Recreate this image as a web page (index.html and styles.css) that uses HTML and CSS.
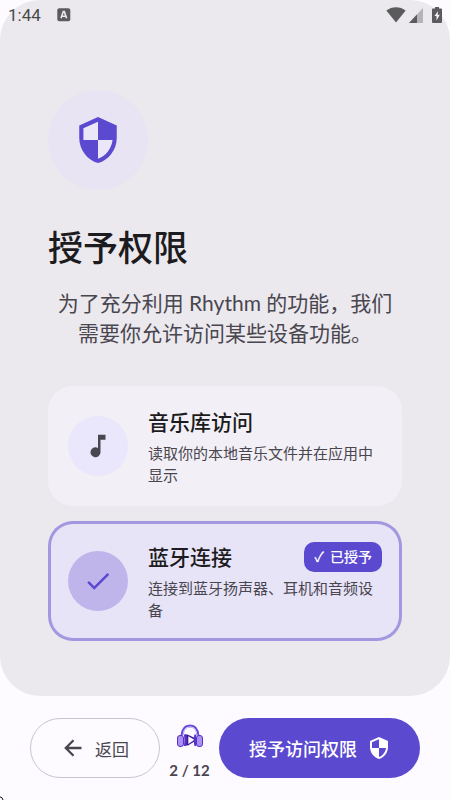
FILE: index.html
```html
<!DOCTYPE html>
<html lang="zh-CN">
<head>
<meta charset="utf-8">
<meta name="viewport" content="width=device-width, initial-scale=1">
<title>授予权限</title>
<link rel="stylesheet" href="styles.css">
</head>
<body>
<div class="screen">
  <main class="panel">
    <div class="status">
      <div class="status-group">
        <span class="clock">1:44</span>
        <svg class="status-a" width="14" height="14" viewBox="0 0 14 14" aria-hidden="true"><rect width="13" height="13" x=".3" y=".3" rx="2" fill="#5b5a5d"/><path d="M4 10.3 6.3 3.6h1L9.600 10.300M4.900 8.200h3.800" fill="none" stroke="#ebe9ee" stroke-width="1.600"/></svg>
      </div>
      <div class="status-group status-right">
        <svg width="20" height="16" viewBox="0 0 20 16" aria-hidden="true"><path d="M.3 3.600C6-1 14-1 19.700 3.600L10 15.500z" fill="#5b5a5d"/></svg>
        <svg class="signal" width="14" height="16" viewBox="0 0 14 16" aria-hidden="true"><path d="M14 1v15H0z" fill="#b5b3b8"/><path d="M8 7.500V16H0z" fill="#5b5a5d"/></svg>
        <svg width="10" height="16" viewBox="0 0 10 16" aria-hidden="true"><path d="M3 0h4v1.500h2q1 0 1 1V15q0 1-1 1H1q-1 0-1-1V2.500q0-1 1-1h2z" fill="#5b5a5d"/><path d="M6 4 2.500 9h2v4.500l3.300-5.700H5.600z" fill="#f5f3f7"/></svg>
      </div>
    </div>
    <div class="content">
      <div class="hero">
        <svg width="50" height="50" viewBox="0 0 24 24" aria-hidden="true"><path d="M12 1 3 5v6c0 5.550 3.840 10.740 9 12 5.160-1.260 9-6.450 9-12V5z" fill="#5b49d0"/><path d="M12 3.200V12H5V6.300zM12 12h7c-.53 4.120-3.280 7.790-7 8.940z" fill="#ece7f8"/></svg>
      </div>
      <h1>授予权限</h1>
      <p class="intro">为了充分利用 Rhythm 的功能，我们需要你允许访问某些设备功能。</p>
      <div class="cards">
        <section class="card">
          <div class="badge-icon"><svg width="30" height="30" viewBox="0 0 24 24" aria-hidden="true"><path d="M12 3v10.550A4 4 0 1 0 14 17V7h4V3z" fill="#49464f"/></svg></div>
          <div class="card-text">
            <div class="card-head"><h2>音乐库访问</h2></div>
            <p>读取你的本地音乐文件并在应用中显示</p>
          </div>
        </section>
        <section class="card granted">
          <div class="badge-icon"><svg width="30" height="30" viewBox="0 0 24 24" aria-hidden="true"><path d="M9 16.170 4.830 12l-1.420 1.410L9 19 21 7l-1.410-1.410z" fill="#5b49d0"/></svg></div>
          <div class="card-text">
            <div class="card-head"><h2>蓝牙连接</h2><span class="tag"><span>✓</span><span>已授予</span></span></div>
            <p>连接到蓝牙扬声器、耳机和音频设备</p>
          </div>
        </section>
      </div>
    </div>
  </main>
  <footer class="footer">
    <button class="btn back" type="button">
      <svg width="24" height="24" viewBox="0 0 24 24" aria-hidden="true"><path d="M20.500 12H5M12.500 4.300 4.800 12l7.700 7.700" fill="none" stroke="#49464f" stroke-width="2.300"/></svg>
      <span>返回</span>
    </button>
    <div class="progress">
      <svg width="28" height="26" viewBox="0 0 28 26" aria-hidden="true">
        <path d="M5.500 12C6 4.500 9 1.500 14 1.500s8 3 8.500 10.500" fill="none" stroke="#6847dc" stroke-width="2"/>
        <path d="M7.300 11C7.800 5.500 10 3.300 14 3.300s6.200 2.200 6.700 7.700" fill="none" stroke="#b9a7f6" stroke-width="1"/>
        <path d="M8.500 10.500h3L20 14.500v2l-8 5H8.500z" fill="#421c9e"/>
        <path d="M12.300 12.300 18.500 15.800l-6.200 4.200z" fill="#fdfbff"/>
        <path d="M8.700 10.500q2.300 5 0 11.500M19.500 10.500q-1.500 5 0 11.500" fill="none" stroke="#5732c8" stroke-width="2"/>
        <rect x="1.500" y="11.500" width="6" height="11" rx="2.500" fill="#a990f2" stroke="#5732c8"/>
        <rect x="20.500" y="11.500" width="6" height="11" rx="2.500" fill="#a990f2" stroke="#5732c8"/>
      </svg>
      <span>2 / 12</span>
    </div>
    <button class="btn primary" type="button">
      <span>授予访问权限</span>
      <svg width="24" height="24" viewBox="0 0 24 24" aria-hidden="true"><path d="M12 1 3 5v6c0 5.550 3.840 10.740 9 12 5.160-1.260 9-6.450 9-12V5z" fill="#fff"/><path d="M12 3.200V12H5V6.300zM12 12h7c-.53 4.120-3.280 7.790-7 8.940z" fill="#5b49d0"/></svg>
    </button>
  </footer>
  <svg class="corner" width="4" height="4" viewBox="0 0 4 4" aria-hidden="true"><path d="M0 .8Q2.600 1.200 3 4" fill="none" stroke="#111"/></svg>
</div>
</body>
</html>
```
FILE: styles.css
```css
* { box-sizing: border-box; }

body {
  margin: 0;
  background: #fdfbff;
  color: #1c1b20;
  font-family: Lato, "Noto Sans CJK SC", sans-serif;
}

h1, h2, p { margin: 0; }
svg { display: block; flex: none; }

.screen {
  position: relative;
  display: flex;
  flex-direction: column;
  min-height: 100vh;
}

.panel {
  flex: 1;
  background: #ebe9ee;
  border-radius: 40px;
}

.status {
  display: flex;
  justify-content: space-between;
  height: 30px;
  padding: 0 8px;
}

.status-group { display: flex; align-items: center; gap: 16px; }
.status-right { gap: 3px; }
.signal { margin-right: 6px; }

.clock {
  font: 400 17px/32px Roboto, sans-serif;
  color: #4b4a4d;
}

.content { padding: 60px 48px 0; }

.hero {
  display: grid;
  place-items: center;
  width: 100px;
  height: 100px;
  border-radius: 50%;
  background: #e8e4f4;
}

h1 {
  margin-top: 35px;
  font-size: 35px;
  line-height: 44px;
  font-weight: 500;
}

.intro {
  margin-top: 19px;
  font-size: 21px;
  line-height: 30px;
  text-align: center;
  color: #49464f;
}

.cards {
  display: grid;
  gap: 15px;
  margin-top: 38px;
}

.card {
  display: flex;
  align-items: center;
  gap: 20px;
  padding: 20px;
  border-radius: 25px;
  background: #f2f0f6;
}

.granted {
  background: #e8e4f8;
  box-shadow: inset 0 0 0 3px #a298df;
}

.badge-icon {
  display: grid;
  place-items: center;
  flex: none;
  width: 60px;
  height: 60px;
  border-radius: 50%;
  background: #eae6fb;
}

.granted .badge-icon { background: #bfb5eb; }

.card-text { flex: 1; }

.card-head {
  display: flex;
  align-items: center;
  justify-content: space-between;
}

h2 {
  font-size: 21px;
  line-height: 32px;
  font-weight: 500;
}

.card p {
  margin-top: 4px;
  font-size: 15px;
  line-height: 22px;
  color: #49464f;
}

.tag {
  display: flex;
  gap: 6px;
  padding: 0 10px;
  border-radius: 10px;
  background: #5b49d0;
  color: #fff;
  font-size: 14px;
  line-height: 30px;
  font-weight: 500;
}

.footer {
  display: flex;
  align-items: center;
  padding: 22px 30px;
}

.btn {
  display: flex;
  align-items: center;
  justify-content: center;
  gap: 10px;
  height: 60px;
  padding: 0 30px;
  border: 0;
  border-radius: 30px;
  font: inherit;
  font-weight: 500;
  white-space: nowrap;
}

.back {
  border: 1px solid #c9c5d0;
  background: transparent;
  color: #49464f;
  font-size: 17px;
  font-weight: 400;
}

.primary {
  background: #5b49d0;
  color: #fff;
  font-size: 18px;
  padding: 0 29px 0 30px;
}

.progress {
  display: flex;
  flex: 1;
  flex-direction: column;
  align-self: flex-end;
  align-items: center;
  gap: 12px;
  font-size: 15px;
  line-height: 16px;
  font-weight: 700;
  color: #49464f;
  white-space: nowrap;
}

.corner {
  position: absolute;
  left: 0;
  bottom: 0;
}
```
